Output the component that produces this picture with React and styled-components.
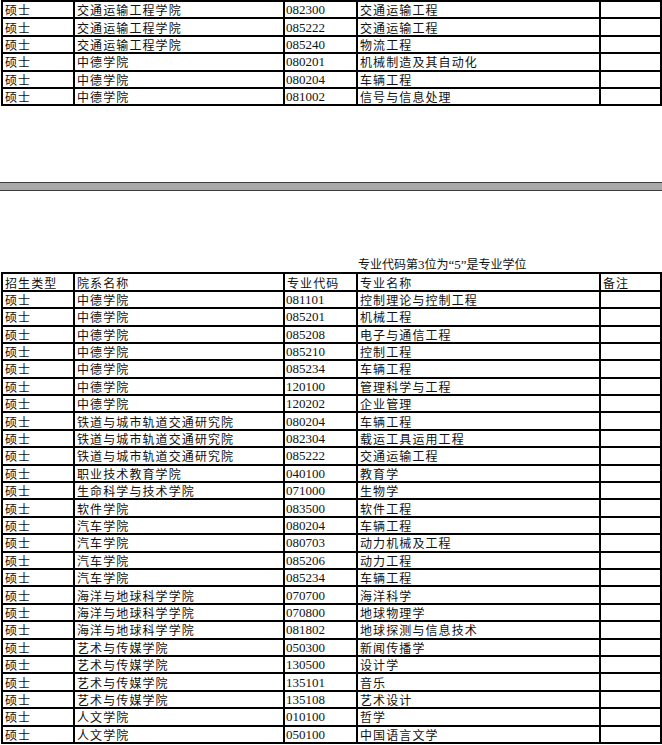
import styled, { createGlobalStyle } from "styled-components";

const GlobalStyle = createGlobalStyle`
  html, body {
    margin: 0;
    padding: 0;
    background: #ffffff;
  }
  body {
    font-family: "Noto Sans CJK SC", sans-serif;
    color: #111111;
    overflow: hidden;
  }
`;

const Page = styled.div`
  width: 662px;
  height: 745px;
  display: flex;
  flex-direction: column;
  overflow: hidden;

  & > * {
    flex-shrink: 0;
  }
`;

const Sheet = styled.table`
  border-collapse: collapse;
  table-layout: fixed;
  width: 659px;
  margin-left: 1px;
`;

const Col = styled.col`
  width: ${(p) => p.$w}px;
`;

const Cell = styled.td`
  border: 2px solid #000000;
  padding: 0 2px;
  height: 15.4px;
  font-family: "Noto Sans CJK SC", sans-serif;
  font-size: 12px;
  line-height: 13px;
  letter-spacing: 1.1px;
  white-space: nowrap;
  overflow: hidden;
  vertical-align: middle;
  color: #111111;
`;

const CodeCell = styled(Cell)`
  font-family: "Liberation Serif", "Times New Roman", serif;
  font-size: 13px;
  letter-spacing: 0;
  padding-left: 1px;
`;

const Divider = styled.div`
  margin-top: 76px;
  height: 7px;
  background: #a9a9a9;
  border-top: 1px solid #3c3c3c;
  border-bottom: 1px solid #3c3c3c;
`;

const Caption = styled.div`
  margin-top: 65px;
  padding-left: 358px;
  height: 16px;
  font-family: "Noto Sans CJK SC", sans-serif;
  font-size: 12px;
  line-height: 16px;
  color: #111111;
`;

const Num = styled.span`
  font-family: "Liberation Serif", "Times New Roman", serif;
  font-size: 13px;
`;

const widths = [72, 210, 73, 243, 61];

const topRows = [
  ["交通运输工程学院", "082300", "交通运输工程"],
  ["交通运输工程学院", "085222", "交通运输工程"],
  ["交通运输工程学院", "085240", "物流工程"],
  ["中德学院", "080201", "机械制造及其自动化"],
  ["中德学院", "080204", "车辆工程"],
  ["中德学院", "081002", "信号与信息处理"],
];

const mainRows = [
  ["中德学院", "081101", "控制理论与控制工程"],
  ["中德学院", "085201", "机械工程"],
  ["中德学院", "085208", "电子与通信工程"],
  ["中德学院", "085210", "控制工程"],
  ["中德学院", "085234", "车辆工程"],
  ["中德学院", "120100", "管理科学与工程"],
  ["中德学院", "120202", "企业管理"],
  ["铁道与城市轨道交通研究院", "080204", "车辆工程"],
  ["铁道与城市轨道交通研究院", "082304", "载运工具运用工程"],
  ["铁道与城市轨道交通研究院", "085222", "交通运输工程"],
  ["职业技术教育学院", "040100", "教育学"],
  ["生命科学与技术学院", "071000", "生物学"],
  ["软件学院", "083500", "软件工程"],
  ["汽车学院", "080204", "车辆工程"],
  ["汽车学院", "080703", "动力机械及工程"],
  ["汽车学院", "085206", "动力工程"],
  ["汽车学院", "085234", "车辆工程"],
  ["海洋与地球科学学院", "070700", "海洋科学"],
  ["海洋与地球科学学院", "070800", "地球物理学"],
  ["海洋与地球科学学院", "081802", "地球探测与信息技术"],
  ["艺术与传媒学院", "050300", "新闻传播学"],
  ["艺术与传媒学院", "130500", "设计学"],
  ["艺术与传媒学院", "135101", "音乐"],
  ["艺术与传媒学院", "135108", "艺术设计"],
  ["人文学院", "010100", "哲学"],
  ["人文学院", "050100", "中国语言文学"],
];

const Cols = () => (
  <colgroup>
    {widths.map((w, i) => (
      <Col key={i} $w={w} />
    ))}
  </colgroup>
);

const DataRow = ({ row }) => (
  <tr>
    <Cell>硕士</Cell>
    <Cell>{row[0]}</Cell>
    <CodeCell>{row[1]}</CodeCell>
    <Cell>{row[2]}</Cell>
    <Cell />
  </tr>
);

export default function App() {
  return (
    <Page>
      <GlobalStyle />
      <Sheet>
        <Cols />
        <tbody>
          {topRows.map((r, i) => (
            <DataRow key={i} row={r} />
          ))}
        </tbody>
      </Sheet>

      <Divider />

      <Caption>
        专业代码第<Num>3</Num>位为<Num>“5”</Num>是专业学位
      </Caption>

      <Sheet>
        <Cols />
        <tbody>
          <tr>
            <Cell>招生类型</Cell>
            <Cell>院系名称</Cell>
            <Cell>专业代码</Cell>
            <Cell>专业名称</Cell>
            <Cell>备注</Cell>
          </tr>
          {mainRows.map((r, i) => (
            <DataRow key={i} row={r} />
          ))}
        </tbody>
      </Sheet>
    </Page>
  );
}
